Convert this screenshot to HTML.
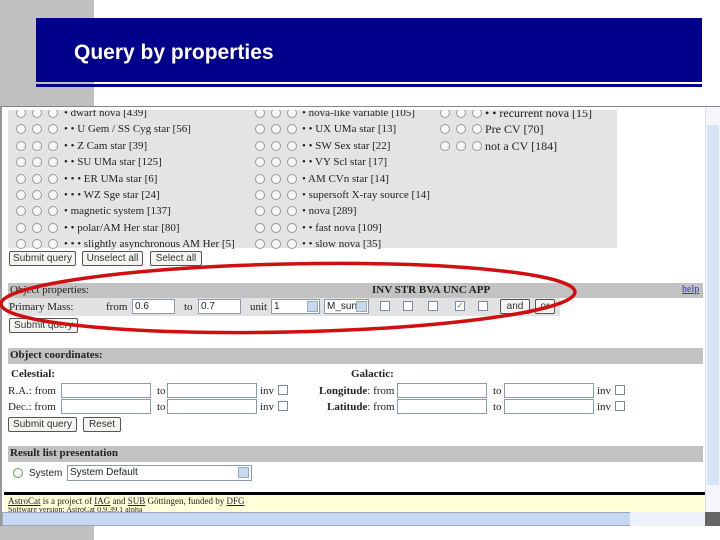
<!DOCTYPE html>
<html><head><meta charset="utf-8"><style>
*{margin:0;padding:0;box-sizing:border-box}
body{width:720px;height:540px;background:#fff;position:relative;overflow:hidden;font-family:"Liberation Serif",serif;font-size:11px;color:#222}
.a{position:absolute;white-space:nowrap}
.r{position:absolute;width:10px;height:10px;border:1px solid #999;border-radius:50%;background:#f6f6f6}
.cb{position:absolute;width:10px;height:10px;border:1px solid #7a8aa0;background:#fff}
.in{position:absolute;height:15px;border:1px solid #8a9bb0;background:#fff;font:10px "Liberation Sans",sans-serif;padding-left:2px;line-height:13px}
.bt{position:absolute;height:15px;border:1px solid #555;border-radius:2px;background:#f4f4f0;font:10px "Liberation Sans",sans-serif;text-align:center;line-height:13px;color:#333}
.bar{position:absolute;left:8px;background:#c2c2c2;font-weight:bold;padding-left:2px}
.sel{position:absolute;width:11px;height:11px;background:#c8d8f0;border:1px solid #9ab}
u{color:#224}
</style></head><body>
<div class="a" style="left:0;top:0;width:94px;height:107px;background:#c0c0c0"></div>
<div class="a" style="left:36px;top:18px;width:666px;height:64px;background:#00008b"></div>
<div class="a" style="left:36px;top:84px;width:666px;height:3px;background:#00008b"></div>
<div class="a" style="left:74px;top:41px;color:#fff;font:bold 21px 'Liberation Sans',sans-serif">Query by properties</div>

<div class="a" style="left:0;top:106px;width:720px;height:420px;border-top:1px solid #888;border-left:2px solid #999"></div>
<div class="a" style="left:8px;top:107px;width:609px;height:141px;background:#e4e4e4"></div>
<div class="a" style="left:705px;top:107px;width:15px;height:405px;background:#f4f6fb;border-left:1px solid #d8dfec"></div>
<div class="a" style="left:707px;top:125px;width:12px;height:360px;background:#d8e3f5"></div>

<div id="rows"></div>
<script>
var L=["• dwarf nova [439]","•  • U Gem / SS Cyg star [56]","•  • Z Cam star [39]","•  • SU UMa star [125]","•  •  • ER UMa star [6]","•  •  • WZ Sge star [24]","• magnetic system [137]","•  • polar/AM Her star [80]","•  •  • slightly asynchronous AM Her [5]"];
var M=["• nova-like variable [105]","•  • UX UMa star [13]","•  • SW Sex star [22]","•  • VY Scl star [17]","• AM CVn star [14]","• supersoft X-ray source [14]","• nova [289]","•  • fast nova [109]","•  • slow nova [35]"];
var R=["•  • recurrent nova [15]","Pre CV [70]","not a CV [184]"];
var h="";
for(var i=0;i<9;i++){var y=104+i*16.4;
 [16,32,48].forEach(function(x){h+='<div class="r" style="left:'+x+'px;top:'+(y+4)+'px"></div>'});
 h+='<div class="a" style="left:64px;top:'+y+'px;font-size:11px;line-height:18px">'+L[i]+'</div>';
 [255,271,287].forEach(function(x){h+='<div class="r" style="left:'+x+'px;top:'+(y+4)+'px"></div>'});
 h+='<div class="a" style="left:302px;top:'+y+'px;font-size:11px;line-height:18px">'+M[i]+'</div>';
 if(i<3){[440,456,472].forEach(function(x){h+='<div class="r" style="left:'+x+'px;top:'+(y+4)+'px"></div>'});
 h+='<div class="a" style="left:485px;top:'+y+'px;font-size:12px;line-height:18px">'+R[i]+'</div>';}
}
document.getElementById("rows").innerHTML=h;
</script>
<div class="a" style="left:2px;top:107px;width:703px;height:3px;background:#fff"></div>

<div class="bt" style="left:9px;top:251px;width:67px">Submit query</div>
<div class="bt" style="left:82px;top:251px;width:61px">Unselect all</div>
<div class="bt" style="left:150px;top:251px;width:52px">Select all</div>

<div class="bar" style="top:283px;width:695px;height:15px;font-weight:normal;line-height:14px">Object properties:</div>
<div class="a" style="left:372px;top:283px;font-weight:bold;line-height:14px">INV STR BVA UNC APP</div>
<div class="a" style="left:682px;top:283px;line-height:14px;color:#33c;text-decoration:underline;font-size:10px">help</div>
<div class="a" style="left:8px;top:298px;width:552px;height:18px;background:#e2e2e2"></div>
<div class="a" style="left:9px;top:299px;line-height:16px">Primary Mass:</div>
<div class="a" style="left:106px;top:299px;line-height:16px">from</div>
<div class="in" style="left:132px;top:299px;width:43px">0.6</div>
<div class="a" style="left:184px;top:299px;line-height:16px">to</div>
<div class="in" style="left:198px;top:299px;width:43px">0.7</div>
<div class="a" style="left:250px;top:299px;line-height:16px">unit</div>
<div class="in" style="left:271px;top:299px;width:49px">1</div><div class="sel" style="left:307px;top:301px"></div>
<div class="in" style="left:324px;top:299px;width:45px">M_sun</div><div class="sel" style="left:356px;top:301px"></div>
<div class="cb" style="left:380px;top:301px"></div><div class="cb" style="left:403px;top:301px"></div><div class="cb" style="left:428px;top:301px"></div>
<div class="cb" style="left:455px;top:301px;font-size:8px;line-height:8px;color:#393;text-align:center">✓</div><div class="cb" style="left:478px;top:301px"></div>
<div class="bt" style="left:500px;top:299px;width:30px">and</div>
<div class="bt" style="left:535px;top:299px;width:20px">or</div>
<div class="bt" style="left:9px;top:318px;width:69px">Submit query</div>

<div class="bar" style="top:348px;width:695px;height:16px;line-height:15px">Object coordinates:</div>
<div class="a" style="left:11px;top:366px;font-weight:bold;line-height:16px">Celestial:</div>
<div class="a" style="left:351px;top:366px;font-weight:bold;line-height:16px">Galactic:</div>
<div class="a" style="left:8px;top:383px;line-height:16px">R.A.: from</div>
<div class="a" style="left:8px;top:399px;line-height:16px">Dec.: from</div>
<div class="in" style="left:61px;top:383px;width:90px"></div><div class="in" style="left:61px;top:399px;width:90px"></div>
<div class="a" style="left:157px;top:383px;line-height:16px">to</div><div class="a" style="left:157px;top:399px;line-height:16px">to</div>
<div class="in" style="left:167px;top:383px;width:90px"></div><div class="in" style="left:167px;top:399px;width:90px"></div>
<div class="a" style="left:260px;top:383px;line-height:16px">inv</div><div class="a" style="left:260px;top:399px;line-height:16px">inv</div>
<div class="cb" style="left:278px;top:385px"></div><div class="cb" style="left:278px;top:401px"></div>
<div class="a" style="left:319px;top:383px;line-height:16px"><b>Longitude</b>: from</div>
<div class="a" style="left:327px;top:399px;line-height:16px"><b>Latitude</b>: from</div>
<div class="in" style="left:397px;top:383px;width:90px"></div><div class="in" style="left:397px;top:399px;width:90px"></div>
<div class="a" style="left:493px;top:383px;line-height:16px">to</div><div class="a" style="left:493px;top:399px;line-height:16px">to</div>
<div class="in" style="left:504px;top:383px;width:90px"></div><div class="in" style="left:504px;top:399px;width:90px"></div>
<div class="a" style="left:597px;top:383px;line-height:16px">inv</div><div class="a" style="left:597px;top:399px;line-height:16px">inv</div>
<div class="cb" style="left:615px;top:385px"></div><div class="cb" style="left:615px;top:401px"></div>
<div class="bt" style="left:8px;top:417px;width:69px">Submit query</div>
<div class="bt" style="left:83px;top:417px;width:38px">Reset</div>

<div class="bar" style="top:446px;width:695px;height:16px;line-height:15px">Result list presentation</div>
<div class="r" style="left:13px;top:468px;border-color:#5a5"></div>
<div class="a" style="left:29px;top:466px;font:10px 'Liberation Sans',sans-serif;line-height:15px">System</div>
<div class="in" style="left:67px;top:465px;width:185px;height:16px">System Default</div><div class="sel" style="left:238px;top:467px"></div>

<div class="a" style="left:4px;top:492px;width:701px;height:3px;background:#000"></div>
<div class="a" style="left:4px;top:495px;width:701px;height:17px;background:#ffffd8"></div>
<div class="a" style="left:8px;top:495px;font-size:9px;line-height:12px"><u>AstroCat</u> is a project of <u>IAG</u> and <u>SUB</u> Göttingen, funded by <u>DFG</u></div>
<div class="a" style="left:8px;top:507px;font-size:8px;line-height:6px;height:5px;overflow:hidden">Software version: AstroCat 0.9.39.1 alpha</div>
<div class="a" style="left:2px;top:512px;width:703px;height:14px;background:#c8d8f2;border:1px solid #9ab"></div>
<div class="a" style="left:630px;top:512px;width:75px;height:14px;background:#eef2fa"></div>
<div class="a" style="left:705px;top:512px;width:15px;height:14px;background:#666"></div>
<div class="a" style="left:0;top:526px;width:94px;height:14px;background:#c0c0c0"></div>

<svg class="a" style="left:0;top:0" width="720" height="540"><ellipse cx="288" cy="298" rx="287" ry="34" fill="none" stroke="#d01010" stroke-width="3.5" transform="rotate(-1.2 288 298)"/></svg>
</body></html>
